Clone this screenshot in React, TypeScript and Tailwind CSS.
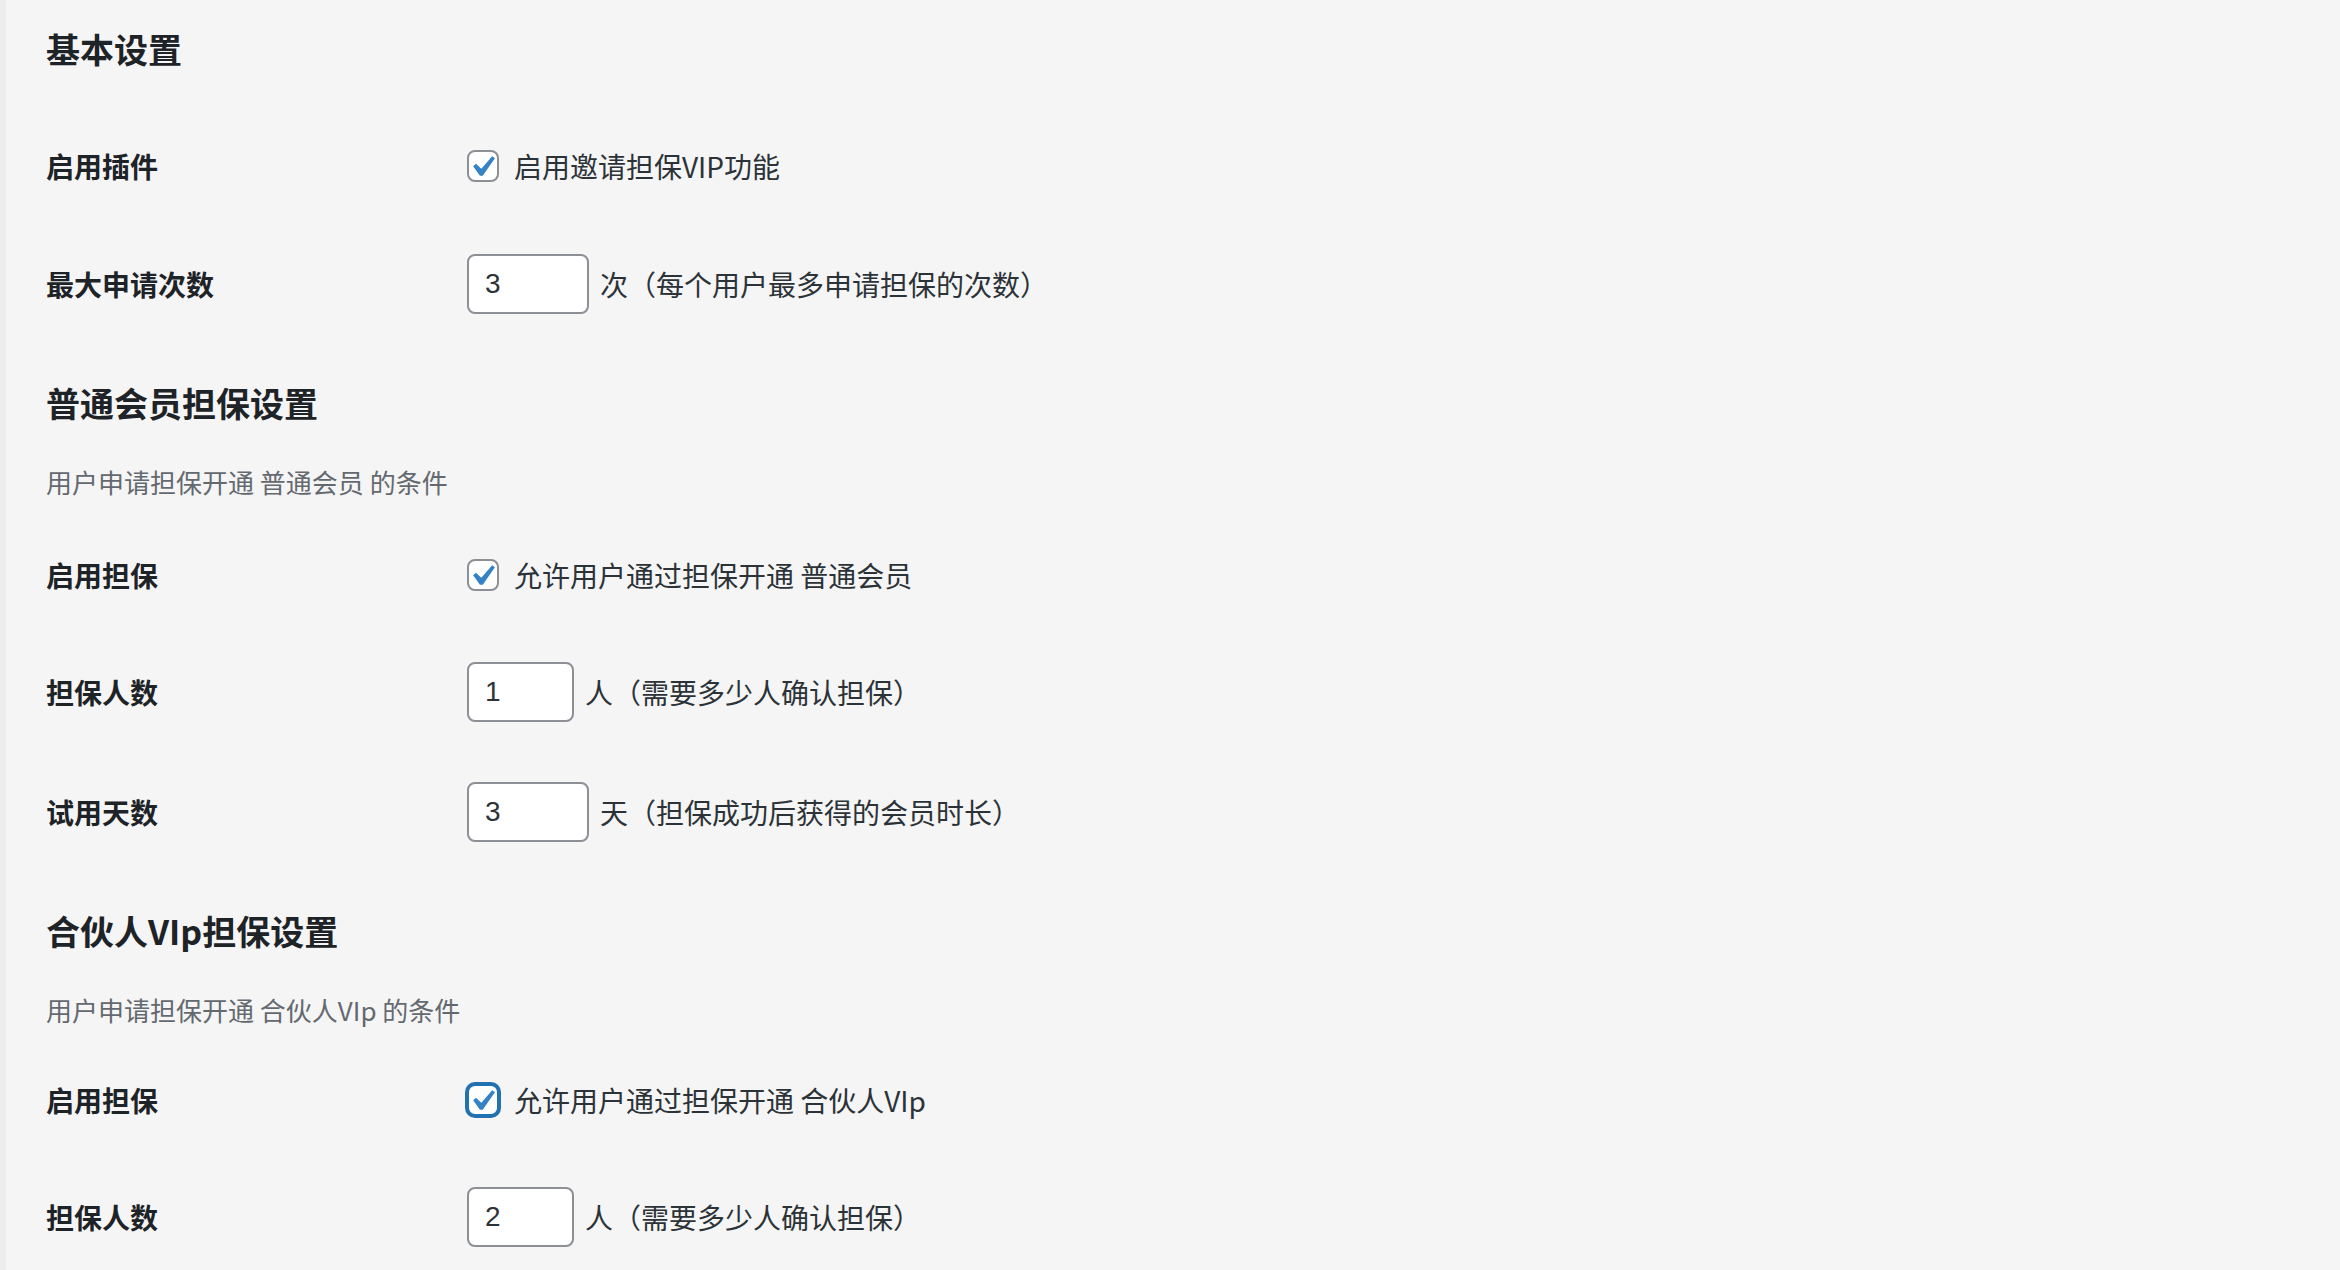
import type { ReactNode } from "react";
import clsx from "clsx";

function Checkbox({ focused = false }: { focused?: boolean }) {
  return (
    <span
      className={clsx(
        "relative block h-[32px] w-[32px] shrink-0 rounded-[8px] border-2 bg-white",
        focused
          ? "border-[#2271b1] shadow-[0_0_0_2px_#2271b1]"
          : "border-[#8c8f94]"
      )}
    >
      <svg
        viewBox="0 0 20 20"
        className="absolute left-[-8px] top-[-6px] h-[42px] w-[42px]"
      >
        <path
          d="M14.83 4.89l1.34.94-5.81 8.38H9.02L5.78 9.67l1.34-1.25 2.57 2.4z"
          fill="#3582c4"
        />
      </svg>
    </span>
  );
}

function NumberInput({ value, wide = false }: { value: string; wide?: boolean }) {
  return (
    <input
      readOnly
      value={value}
      className={clsx(
        "h-[60px] shrink-0 rounded-[8px] border-2 border-[#8c8f94] bg-white px-[16px] font-['Liberation_Sans',sans-serif] text-[28px] text-[#2c3338] outline-none",
        wide ? "w-[122px]" : "w-[107px]"
      )}
    />
  );
}

function Row({
  label,
  height,
  children,
}: {
  label: string;
  height: string;
  children: ReactNode;
}) {
  return (
    <div className={clsx("flex items-center", height)}>
      <div className="w-[421px] shrink-0 text-[28px] font-semibold leading-[36px] text-[#1d2327]">
        {label}
      </div>
      <div className="flex items-center text-[28px] leading-[36px] text-[#2c3338]">
        {children}
      </div>
    </div>
  );
}

function CheckRow({
  label,
  text,
  height,
  focused,
}: {
  label: string;
  text: string;
  height: string;
  focused?: boolean;
}) {
  return (
    <Row label={label} height={height}>
      <Checkbox focused={focused} />
      <span className="ml-[15px]">{text}</span>
    </Row>
  );
}

function InputRow({
  label,
  value,
  unit,
  wide,
}: {
  label: string;
  value: string;
  unit: string;
  wide?: boolean;
}) {
  return (
    <Row label={label} height="h-[120px]">
      <NumberInput value={value} wide={wide} />
      <span className="ml-[11px]">{unit}</span>
    </Row>
  );
}

function Heading({ children, first = false }: { children: ReactNode; first?: boolean }) {
  return (
    <h2
      className={clsx(
        "text-[34px] font-semibold leading-[40px] text-[#1d2327]",
        first ? "mt-[29px] mb-[39px]" : "mt-[39px]"
      )}
    >
      {children}
    </h2>
  );
}

export default function App() {
  return (
    <div className="flex min-h-screen flex-col overflow-hidden border-l-[6px] border-[#ededed] bg-[#f5f5f5] pl-[40px] font-['Noto_Sans_CJK_SC',sans-serif]">
      <Heading first>基本设置</Heading>
      <CheckRow label="启用插件" text="启用邀请担保VIP功能" height="h-[116px]" />
      <InputRow label="最大申请次数" value="3" unit="次（每个用户最多申请担保的次数）" wide />

      <Heading>普通会员担保设置</Heading>
      <p className="mt-[41px] mb-[18px] text-[26px] leading-[36px] text-[#646970]">
        用户申请担保开通 普通会员 的条件
      </p>
      <CheckRow label="启用担保" text="允许用户通过担保开通 普通会员" height="h-[114px]" />
      <InputRow label="担保人数" value="1" unit="人（需要多少人确认担保）" />
      <InputRow label="试用天数" value="3" unit="天（担保成功后获得的会员时长）" wide />

      <Heading>合伙人VIp担保设置</Heading>
      <p className="mt-[41px] mb-[15px] text-[26px] leading-[36px] text-[#646970]">
        用户申请担保开通 合伙人VIp 的条件
      </p>
      <CheckRow
        label="启用担保"
        text="允许用户通过担保开通 合伙人VIp"
        height="h-[114px]"
        focused
      />
      <InputRow label="担保人数" value="2" unit="人（需要多少人确认担保）" />
    </div>
  );
}
